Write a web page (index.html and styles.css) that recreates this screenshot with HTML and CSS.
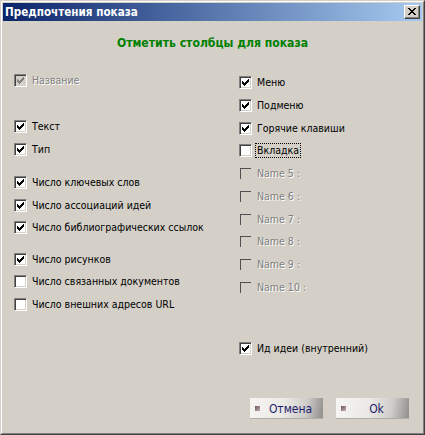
FILE: index.html
```html
<!DOCTYPE html>
<html>
<head>
<meta charset="utf-8">
<link rel="stylesheet" href="styles.css">
</head>
<body>
<div class="window">
  <div class="frame">
    <div class="titlebar">
      <span class="title">Предпочтения показа</span>
      <span class="close">
        <svg width="8" height="7" viewBox="0 0 8 7"><path d="M0 0h2v1h-2zM6 0h2v1h-2zM1 1h2v1h-2zM5 1h2v1h-2zM2 2h4v1h-4zM3 3h2v1h-2zM2 4h4v1h-4zM1 5h2v1h-2zM5 5h2v1h-2zM0 6h2v1h-2zM6 6h2v1h-2z" fill="#000"/></svg>
      </span>
    </div>
    <div class="body">
      <div class="heading">Отметить столбцы для показа</div>
      <div class="columns">
        <div class="col col-left">
          <div class="row"><span class="cb dis-checked"><svg class="chk" width="7" height="7" viewBox="0 0 7 7"><path d="M6 0h1v1h-1zM5 1h2v1h-2zM0 2h1v1h-1zM4 2h3v1h-3zM0 3h2v1h-2zM3 3h3v1h-3zM0 4h5v1h-5zM1 5h3v1h-3zM2 6h1v1h-1z"/></svg></span><span class="lbl disabled">Название</span></div>
          <div class="row gap-a"><span class="cb"><svg class="chk" width="7" height="7" viewBox="0 0 7 7"><path d="M6 0h1v1h-1zM5 1h2v1h-2zM0 2h1v1h-1zM4 2h3v1h-3zM0 3h2v1h-2zM3 3h3v1h-3zM0 4h5v1h-5zM1 5h3v1h-3zM2 6h1v1h-1z"/></svg></span><span class="lbl">Текст</span></div>
          <div class="row"><span class="cb"><svg class="chk" width="7" height="7" viewBox="0 0 7 7"><path d="M6 0h1v1h-1zM5 1h2v1h-2zM0 2h1v1h-1zM4 2h3v1h-3zM0 3h2v1h-2zM3 3h3v1h-3zM0 4h5v1h-5zM1 5h3v1h-3zM2 6h1v1h-1z"/></svg></span><span class="lbl">Тип</span></div>
          <div class="row gap-b"><span class="cb"><svg class="chk" width="7" height="7" viewBox="0 0 7 7"><path d="M6 0h1v1h-1zM5 1h2v1h-2zM0 2h1v1h-1zM4 2h3v1h-3zM0 3h2v1h-2zM3 3h3v1h-3zM0 4h5v1h-5zM1 5h3v1h-3zM2 6h1v1h-1z"/></svg></span><span class="lbl">Число ключевых слов</span></div>
          <div class="row"><span class="cb"><svg class="chk" width="7" height="7" viewBox="0 0 7 7"><path d="M6 0h1v1h-1zM5 1h2v1h-2zM0 2h1v1h-1zM4 2h3v1h-3zM0 3h2v1h-2zM3 3h3v1h-3zM0 4h5v1h-5zM1 5h3v1h-3zM2 6h1v1h-1z"/></svg></span><span class="lbl">Число ассоциаций идей</span></div>
          <div class="row"><span class="cb"><svg class="chk" width="7" height="7" viewBox="0 0 7 7"><path d="M6 0h1v1h-1zM5 1h2v1h-2zM0 2h1v1h-1zM4 2h3v1h-3zM0 3h2v1h-2zM3 3h3v1h-3zM0 4h5v1h-5zM1 5h3v1h-3zM2 6h1v1h-1z"/></svg></span><span class="lbl">Число библиографических ссылок</span></div>
          <div class="row gap-c"><span class="cb"><svg class="chk" width="7" height="7" viewBox="0 0 7 7"><path d="M6 0h1v1h-1zM5 1h2v1h-2zM0 2h1v1h-1zM4 2h3v1h-3zM0 3h2v1h-2zM3 3h3v1h-3zM0 4h5v1h-5zM1 5h3v1h-3zM2 6h1v1h-1z"/></svg></span><span class="lbl">Число рисунков</span></div>
          <div class="row"><span class="cb"></span><span class="lbl">Число связанных документов</span></div>
          <div class="row"><span class="cb"></span><span class="lbl">Число внешних адресов URL</span></div>
        </div>
        <div class="col col-right">
          <div class="row r"><span class="cb"><svg class="chk" width="7" height="7" viewBox="0 0 7 7"><path d="M6 0h1v1h-1zM5 1h2v1h-2zM0 2h1v1h-1zM4 2h3v1h-3zM0 3h2v1h-2zM3 3h3v1h-3zM0 4h5v1h-5zM1 5h3v1h-3zM2 6h1v1h-1z"/></svg></span><span class="lbl">Меню</span></div>
          <div class="row r"><span class="cb"><svg class="chk" width="7" height="7" viewBox="0 0 7 7"><path d="M6 0h1v1h-1zM5 1h2v1h-2zM0 2h1v1h-1zM4 2h3v1h-3zM0 3h2v1h-2zM3 3h3v1h-3zM0 4h5v1h-5zM1 5h3v1h-3zM2 6h1v1h-1z"/></svg></span><span class="lbl">Подменю</span></div>
          <div class="row r"><span class="cb"><svg class="chk" width="7" height="7" viewBox="0 0 7 7"><path d="M6 0h1v1h-1zM5 1h2v1h-2zM0 2h1v1h-1zM4 2h3v1h-3zM0 3h2v1h-2zM3 3h3v1h-3zM0 4h5v1h-5zM1 5h3v1h-3zM2 6h1v1h-1z"/></svg></span><span class="lbl">Горячие клавиши</span></div>
          <div class="row r"><span class="cb"></span><span class="lbl focus">Вкладка</span></div>
          <div class="row r"><span class="cb flat"></span><span class="lbl disabled">Name 5 :</span></div>
          <div class="row r"><span class="cb flat"></span><span class="lbl disabled">Name 6 :</span></div>
          <div class="row r"><span class="cb flat"></span><span class="lbl disabled">Name 7 :</span></div>
          <div class="row r"><span class="cb flat"></span><span class="lbl disabled">Name 8 :</span></div>
          <div class="row r"><span class="cb flat"></span><span class="lbl disabled">Name 9 :</span></div>
          <div class="row r"><span class="cb flat"></span><span class="lbl disabled">Name 10 :</span></div>
          <div class="row r gap-d"><span class="cb"><svg class="chk" width="7" height="7" viewBox="0 0 7 7"><path d="M6 0h1v1h-1zM5 1h2v1h-2zM0 2h1v1h-1zM4 2h3v1h-3zM0 3h2v1h-2zM3 3h3v1h-3zM0 4h5v1h-5zM1 5h3v1h-3zM2 6h1v1h-1z"/></svg></span><span class="lbl">Ид идеи (внутренний)</span></div>
        </div>
      </div>
      <div class="buttons">
        <div class="btn"><span class="bullet"></span><span class="btn-text">Отмена</span></div>
        <div class="btn"><span class="bullet"></span><span class="btn-text">Ok</span></div>
      </div>
    </div>
  </div>
</div>
</body>
</html>
```
FILE: styles.css
```css
html, body {
  margin: 0;
  padding: 0;
  background: #d4d0c8;
}
body {
  font-family: "DejaVu Sans Condensed", "DejaVu Sans", sans-serif;
  font-stretch: condensed;
  font-size: 10.5px;
  color: #000;
}
.window {
  width: 425px;
  height: 435px;
  box-sizing: border-box;
  border: 1px solid;
  border-color: #d4d0c8 #404040 #404040 #d4d0c8;
  background: #d4d0c8;
}
.frame {
  height: 100%;
  box-sizing: border-box;
  border: 1px solid;
  border-color: #ffffff #808080 #808080 #ffffff;
  padding: 1px;
  display: flex;
  flex-direction: column;
}
.titlebar {
  height: 18px;
  flex: none;
  display: flex;
  align-items: center;
  justify-content: space-between;
  background: linear-gradient(to right, #0a246a, #a6caf0);
  padding-left: 2px;
}
.title {
  color: #fff;
  font-weight: bold;
  font-size: 11.6px;
  line-height: 18px;
}
.close {
  width: 16px;
  height: 14px;
  box-sizing: border-box;
  margin-right: 2px;
  background: #d4d0c8;
  border: 1px solid;
  border-color: #fff #404040 #404040 #fff;
  box-shadow: inset -1px -1px 0 #808080;
  display: flex;
  align-items: center;
  justify-content: center;
  padding: 0 1px 1px 0;
}
.close svg { display: block; }
.body {
  flex: 1;
  display: flex;
  flex-direction: column;
}
.heading {
  margin-top: 14px;
  height: 16px;
  line-height: 16px;
  text-align: center;
  color: #008000;
  font-weight: bold;
  font-size: 12.1px;
}
.columns {
  margin-top: 23px;
  padding-left: 11px;
  display: grid;
  grid-template-columns: 225px auto;
}
.col {
  display: flex;
  flex-direction: column;
}
.col-right { margin-top: 2px; }
.row {
  height: 22.5px;
  display: flex;
  align-items: flex-start;
}
.row.r { height: 22.75px; }
.gap-a { margin-top: 23.5px; }
.gap-b { margin-top: 11px; }
.gap-c { margin-top: 9px; }
.gap-d { margin-top: 38.5px; }
.cb {
  width: 13px;
  height: 13px;
  flex: none;
  box-sizing: border-box;
  border: 1px solid;
  border-color: #808080 #ffffff #ffffff #808080;
  box-shadow: inset 1px 1px 0 #404040, inset -1px -1px 0 #d4d0c8;
  background: #fff;
  padding: 2px;
}
.chk { display: block; fill: #000; }
.cb.dis-checked { background: #d4d0c8; }
.cb.dis-checked .chk { fill: #808080; }
.cb.flat {
  border-color: transparent;
  background: transparent;
  box-shadow: inset 1px 1px 0 #505050;
}
.lbl {
  margin-left: 5px;
  line-height: 13px;
  white-space: nowrap;
}
.lbl.disabled {
  color: #808080;
  text-shadow: 1px 1px 0 #fff;
}
.lbl.focus {
  outline: 1px dotted #000;
  margin-left: 4px;
  padding: 0 1px;
}
.buttons {
  margin-top: auto;
  margin-bottom: 13px;
  display: flex;
  justify-content: flex-end;
  gap: 13px;
  padding-right: 13px;
}
.btn {
  width: 73px;
  height: 21px;
  box-sizing: border-box;
  display: flex;
  align-items: center;
  background: linear-gradient(100deg, #f6f5f3 0%, #ebe9e5 45%, #cfcdc9 75%, #8e8d8a 100%);
  box-shadow: inset 0 -1px 0 #b0aeaa;
  padding-left: 5px;
}
.bullet {
  width: 5px;
  height: 5px;
  flex: none;
  background: linear-gradient(135deg, #6e5454, #c4b0b0);
}
.btn-text {
  flex: 1;
  text-align: center;
  color: #1c1c6c;
  font-size: 12px;
  padding-right: 2px;
}
```
